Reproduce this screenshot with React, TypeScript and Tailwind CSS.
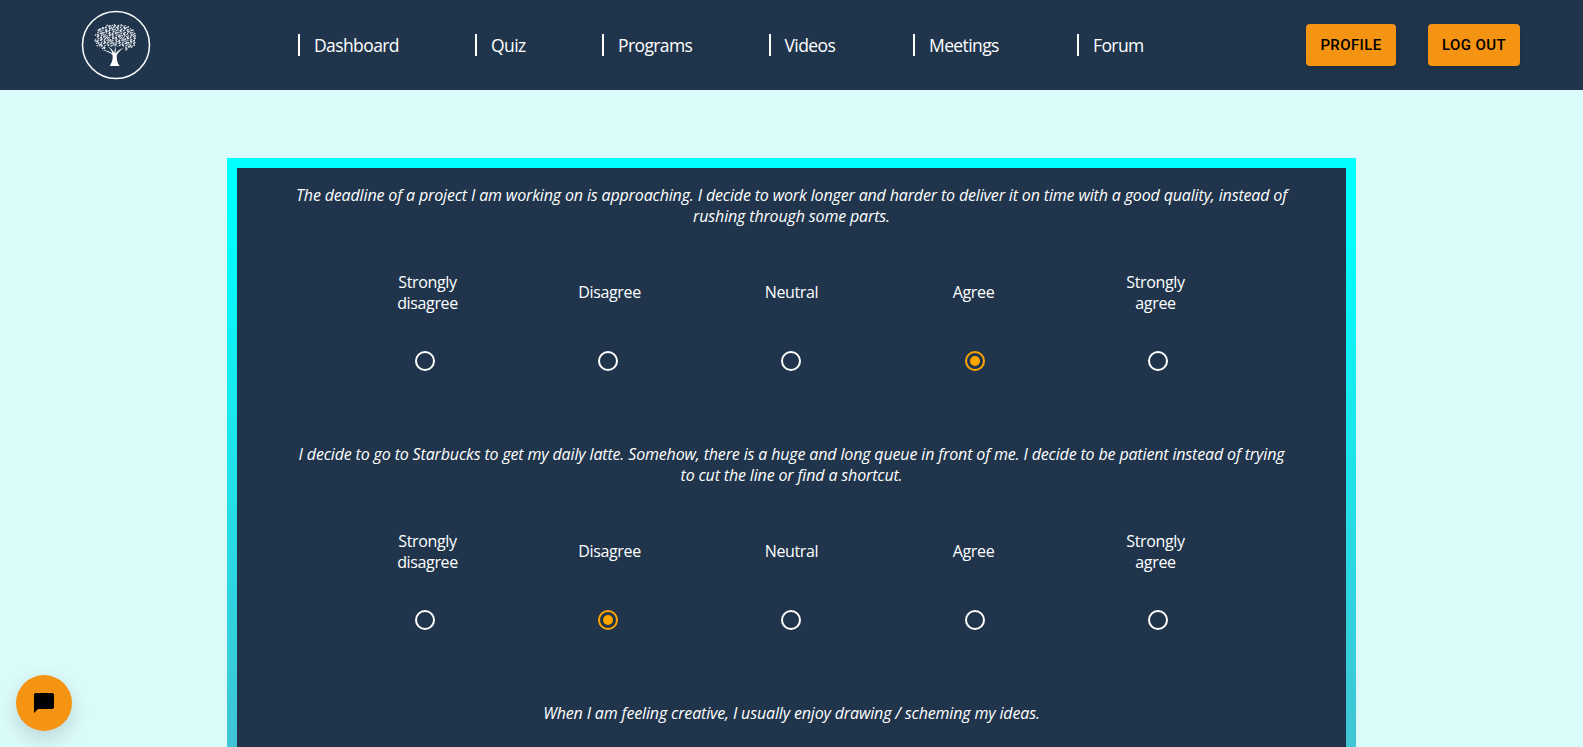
const navItems = ["Dashboard", "Quiz", "Programs", "Videos", "Meetings", "Forum"];
const scale = ["Strongly disagree", "Disagree", "Neutral", "Agree", "Strongly agree"];

// canopy of the logo: small speckled dots, jittered so it reads as foliage
const leaves: { x: number; y: number; r: number }[] = [];
for (let row = 0; row < 18; row++) {
  for (let col = 0; col < 28; col++) {
    const jx = Math.sin(row * 12.9 + col * 78.2) * 0.5;
    const jy = Math.cos(row * 39.3 + col * 11.1) * 0.5;
    const x = 12.5 + col * 1.65 + (row % 2) * 0.8 + jx;
    const y = 14 + row * 1.65 + jy;
    const dx = (x - 34.5) / 21.5;
    const dy = (y - 28) / 14;
    const inCanopy = dx * dx + Math.abs(dy * dy * dy) <= 0.98 - Math.abs(Math.sin(col * 3.1 + row)) * 0.12;
    const inGap = y > 36 && Math.abs(x - 34.5) < 10;
    if (inCanopy && !inGap) {
      leaves.push({ x, y, r: 0.5 + Math.abs(Math.sin(row * 5.3 + col * 2.7)) * 0.32 });
    }
  }
}

function Logo() {
  return (
    <svg width="70" height="70" viewBox="0 0 70 70" fill="none" className="shrink-0">
      <circle cx="35" cy="35" r="33.5" stroke="white" strokeWidth="1.5" />
      {leaves.map((l, i) => (
        <circle key={i} cx={l.x} cy={l.y} r={l.r} fill="#f1f3f5" />
      ))}
      <path
        d="M29 55.500c2.200-3 3-7 2.600-10.500-2.600-2.600-6.600-4-10.600-5 4 .2 7.600 1.400 10.400 3.400-.6-2.400-2.200-4.800-4.400-6.900 2.800 1.500 5 3.800 6.200 6.600.7-2.600.8-5.200.5-7.600 1.300 2.700 1.300 5.700.7 8.300 2-2.800 5.200-5 9-6.300-3.200 2-6.200 4.600-7.600 7.700-.4 3.800.4 7.800 2.900 10.800l-9.700 0z"
        fill="white"
      />
    </svg>
  );
}

function Radio({ checked }: { checked?: boolean }) {
  return (
    <span
      className={`flex h-5 w-5 items-center justify-center rounded-full border-2 ${
        checked ? "border-[#ffa500]" : "border-white"
      }`}
    >
      {checked && <span className="h-[10px] w-[10px] rounded-full bg-[#ffa500]" />}
    </span>
  );
}

function Question({ lines, answer }: { lines: string[]; answer?: number }) {
  return (
    <div className="h-[259px]">
      <p className="text-center text-[16px] italic leading-[21px] tracking-[-0.15px] text-white">
        {lines.map((line) => (
          <span key={line} className="block">
            {line}
          </span>
        ))}
      </p>
      {answer !== undefined && (
        <>
          <div className="mx-auto mt-[34px] grid w-[910px] grid-cols-5 text-center text-[16px] leading-[21px] tracking-[-0.35px] text-white">
            {scale.map((label) => (
              <div key={label} className="flex h-[63px] items-center justify-center">
                <span className="w-[90px]">{label}</span>
              </div>
            ))}
          </div>
          <div className="mx-auto mt-[27px] grid w-[917px] grid-cols-5">
            {scale.map((label, i) => (
              <div key={label} className="flex justify-center">
                <Radio checked={i === answer} />
              </div>
            ))}
          </div>
        </>
      )}
    </div>
  );
}

export default function App() {
  return (
    <div className="h-screen overflow-hidden bg-[#dbfafa] font-['Open_Sans',sans-serif]">
      <header className="flex h-[90px] items-center bg-[#20354c] pl-[81px] pr-[63px]">
        <Logo />
        <nav className="ml-[147px] flex items-center">
          {navItems.map((item, i) => (
            <a
              key={item}
              className={`flex h-[22px] items-center border-l-2 border-white pl-[14px] text-[17.5px] tracking-[-0.6px] text-white ${
                ["w-[177px]", "w-[127px]", "w-[166.5px]", "w-[144.5px]", "w-[164px]", "w-auto"][i]
              }`}
            >
              {item}
            </a>
          ))}
        </nav>
        <div className="ml-auto flex gap-8 font-['Roboto',sans-serif]">
          <button className="h-[42px] w-[90px] rounded bg-[#f59313] text-[15px] font-medium tracking-[0.4px] text-black shadow-md">
            PROFILE
          </button>
          <button className="h-[42px] w-[92px] rounded bg-[#f59313] text-[15px] font-medium tracking-[0.4px] text-black shadow-md">
            LOG OUT
          </button>
        </div>
      </header>

      <main className="mx-auto mt-[68px] h-[700px] w-[1129px] bg-[linear-gradient(180deg,#00ffff_0px,#00ffff_40px,#40c4d4_589px)] p-[10px]">
        <div className="h-full bg-[#20354c] pt-[17px]">
          <Question
            lines={[
              "The deadline of a project I am working on is approaching. I decide to work longer and harder to deliver it on time with a good quality, instead of",
              "rushing through some parts.",
            ]}
            answer={3}
          />
          <Question
            lines={[
              "I decide to go to Starbucks to get my daily latte. Somehow, there is a huge and long queue in front of me. I decide to be patient instead of trying",
              "to cut the line or find a shortcut.",
            ]}
            answer={1}
          />
          <Question lines={["When I am feeling creative, I usually enjoy drawing / scheming my ideas."]} />
        </div>
      </main>

      <button className="fixed bottom-[16px] left-[16px] flex h-[56px] w-[56px] items-center justify-center rounded-full bg-[#f59313] shadow-[0_8px_20px_rgba(0,0,0,0.14)]">
        <svg width="24" height="24" viewBox="0 0 24 24" fill="black">
          <path d="M20 2H4c-1.100 0-2 .9-2 2v18l4-4h14c1.100 0 2-.9 2-2V4c0-1.100-.9-2-2-2z" />
        </svg>
      </button>
    </div>
  );
}
